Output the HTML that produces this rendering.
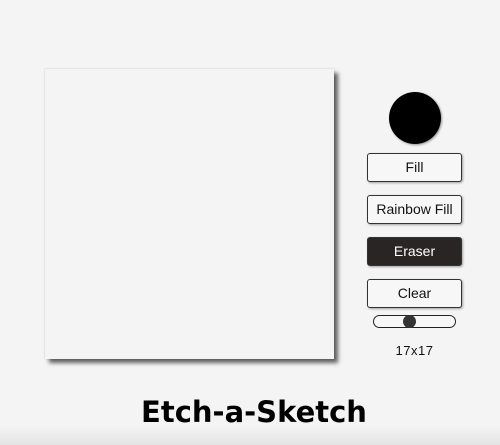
<!DOCTYPE html>
<html><head><style>
html,body{margin:0;padding:0}
body{width:500px;height:445px;background:linear-gradient(#f4f4f4 0,#f4f4f4 425px,#e4e4e4 445px);position:relative;overflow:hidden;font-family:"Liberation Sans",Arial,sans-serif}
.board{position:absolute;left:45px;top:69px;width:289px;height:290px;background:#f4f4f4;box-shadow:4px 4px 4px rgba(0,0,0,.6),0 0 2px rgba(0,0,0,.15)}
.dot{position:absolute;left:389px;top:92px;width:52px;height:52px;border-radius:50%;background:#000;box-shadow:1px 1px 2px rgba(0,0,0,.4)}
.btn{position:absolute;left:367px;width:93px;height:27px;border:1px solid #333;border-radius:3px;background:#f7f7f7;box-shadow:1px 1px 2px rgba(0,0,0,.35);font-size:14px;line-height:27px;text-align:center;color:#111}
.btn.dark{background:#2a2525;color:#fff}
.slider{position:absolute;left:373px;top:315px;width:81px;height:11px;border:1px solid #222;border-radius:7px;background:#f7f7f7}
.knob{position:absolute;left:403px;top:315px;width:13px;height:13px;border-radius:50%;background:#333}
.size{position:absolute;left:367px;width:95px;top:343px;text-align:center;font-size:13px;color:#111;letter-spacing:.5px}
h1{position:absolute;left:0;width:508px;top:395px;margin:0;text-align:center;font-family:"DejaVu Sans",sans-serif;font-weight:bold;font-size:29px;color:#000}
</style></head><body>
<div class="board"></div>
<div class="dot"></div>
<div class="btn" style="top:153px">Fill</div>
<div class="btn" style="top:195px">Rainbow Fill</div>
<div class="btn dark" style="top:237px">Eraser</div>
<div class="btn" style="top:279px">Clear</div>
<div class="slider"></div><div class="knob"></div>
<div class="size">17x17</div>
<h1>Etch-a-Sketch</h1>
</body></html>
